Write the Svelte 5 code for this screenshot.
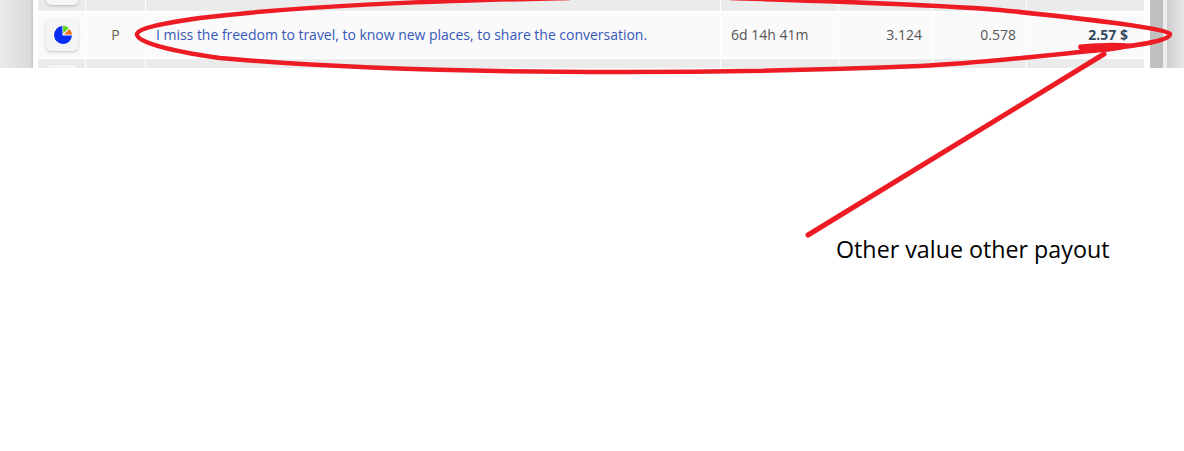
<script>
  const rows = [
    { kind: 'alt', clip: true },
    {
      kind: 'main',
      type: 'P',
      title: 'I miss the freedom to travel, to know new places, to share the conversation.',
      age: '6d 14h 41m',
      rshares: '3.124',
      weight: '0.578',
      payout: '2.57 $'
    },
    { kind: 'alt' }
  ];
</script>

<div class="shot">
  <div class="frame-left"></div>
  <div class="table">
    {#each rows as row}
      <div class="row {row.kind}">
        <div class="cell icon-cell">
          <div class="icon-btn">
            {#if row.type}
              <svg width="20" height="20" viewBox="0 0 20 20">
                <path d="M9.4 1 A9 9 0 1 0 19 10.6 L9.4 10.6 Z" fill="#0a2df5" />
                <path d="M10.2 0.6 V8.6 L15.8 3 A9 9 0 0 0 10.2 0.6 Z" fill="#5fd41f" />
                <path d="M11 9.6 L16.4 4 A9 9 0 0 1 19 9.6 Z" fill="#f0701a" />
              </svg>
            {/if}
          </div>
        </div>
        <div class="cell type">{row.type ?? ''}</div>
        <div class="cell title">{row.title ?? ''}</div>
        <div class="cell age">{row.age ?? ''}</div>
        <div class="cell num">{row.rshares ?? ''}</div>
        <div class="cell num">{row.weight ?? ''}</div>
        <div class="cell num payout">{row.payout ?? ''}</div>
      </div>
    {/each}
  </div>
  <div class="frame-right">
    <div class="scroll-track"></div>
    <div class="scroll-edge"></div>
    <div class="scroll-fade"></div>
  </div>
</div>

<svg class="marks" width="1184" height="451" viewBox="0 0 1184 451">
  <path
    class="ink"
    d="M570 -2 C420 1 300 6 200 18 C165 23 138 28 137 34 C136 42 170 51 220 58 C330 68 480 72 620 72 C700 72 800 71 920 66 C980 63 1040 56 1100 50 C1140 45 1170 41 1170 34 C1166 29 1100 20 1000 10 C930 4 820 1 730 -2"
  />
  <path class="scrawl" d="M1080 46 C1095 44 1118 44 1130 45 C1120 50 1100 51 1090 51 C1082 50 1078 48 1080 46 Z" />
  <path class="arrow" d="M808 235 L1104 54" />
</svg>

<p class="note">Other value other payout</p>

<style>
  :global(body) {
    background: #fff;
  }

  .shot {
    display: flex;
    height: 68px;
    overflow: hidden;
    font-family: "Open Sans", sans-serif;
    font-size: 14px;
    color: #555;
  }

  .frame-left {
    width: 33px;
    margin-right: 5px;
    background: linear-gradient(to right, #e9e9e9, #dedede 70%, #dbdbdb 90%, #c6c6c6);
  }

  .table {
    width: 1106px;
    margin-top: -33px;
    display: flex;
    flex-direction: column;
    gap: 2px;
  }

  .row {
    display: grid;
    grid-template-columns: 47px 59px 574px 117px 93px 93px 117px;
    column-gap: 1px;
    height: 44px;
    flex-shrink: 0;
  }

  .cell {
    display: flex;
    align-items: center;
    padding-bottom: 2px;
    box-sizing: border-box;
  }

  .alt .cell {
    background: #ebebeb;
  }

  .main .cell {
    background: #fafafa;
  }

  .icon-cell {
    padding-left: 8px;
    padding-bottom: 0;
  }

  .icon-btn {
    width: 32px;
    height: 32px;
    border-radius: 5px;
    background: #f5f5f5;
    box-shadow: 0 1px 3px rgba(0, 0, 0, 0.22);
    display: flex;
    align-items: center;
    justify-content: center;
  }

  .icon-btn svg {
    margin-left: 2px;
  }

  .type {
    justify-content: center;
    color: #6b5d45;
  }

  .title {
    padding-left: 10px;
    color: #3558b8;
    white-space: nowrap;
    letter-spacing: -0.02px;
  }

  .age {
    padding-left: 10px;
  }

  .num {
    justify-content: flex-end;
    padding-right: 10px;
  }

  .payout {
    padding-right: 16px;
    font-weight: 700;
    color: #34495e;
  }

  .frame-right {
    display: flex;
    margin-left: 6px;
    flex: 1;
  }

  .scroll-track {
    width: 13px;
    background: #c0c0c0;
  }

  .scroll-edge {
    width: 4px;
    background: #ededed;
  }

  .scroll-fade {
    flex: 1;
    background: linear-gradient(to right, #cfcfcf, #e8e8e8);
  }

  .marks {
    position: absolute;
    top: 0;
    left: 0;
    pointer-events: none;
  }

  .ink {
    fill: none;
    stroke: #ed1c24;
    stroke-width: 4.5;
  }

  .scrawl {
    fill: #ed1c24;
    stroke: #ed1c24;
    stroke-width: 3;
  }

  .arrow {
    fill: none;
    stroke: #ed1c24;
    stroke-width: 5;
    stroke-linecap: round;
  }

  .note {
    position: absolute;
    top: 234px;
    left: 836px;
    margin: 0;
    font-family: "Open Sans", sans-serif;
    font-size: 23.25px;
    line-height: 30px;
    color: #000;
    white-space: nowrap;
  }
</style>
